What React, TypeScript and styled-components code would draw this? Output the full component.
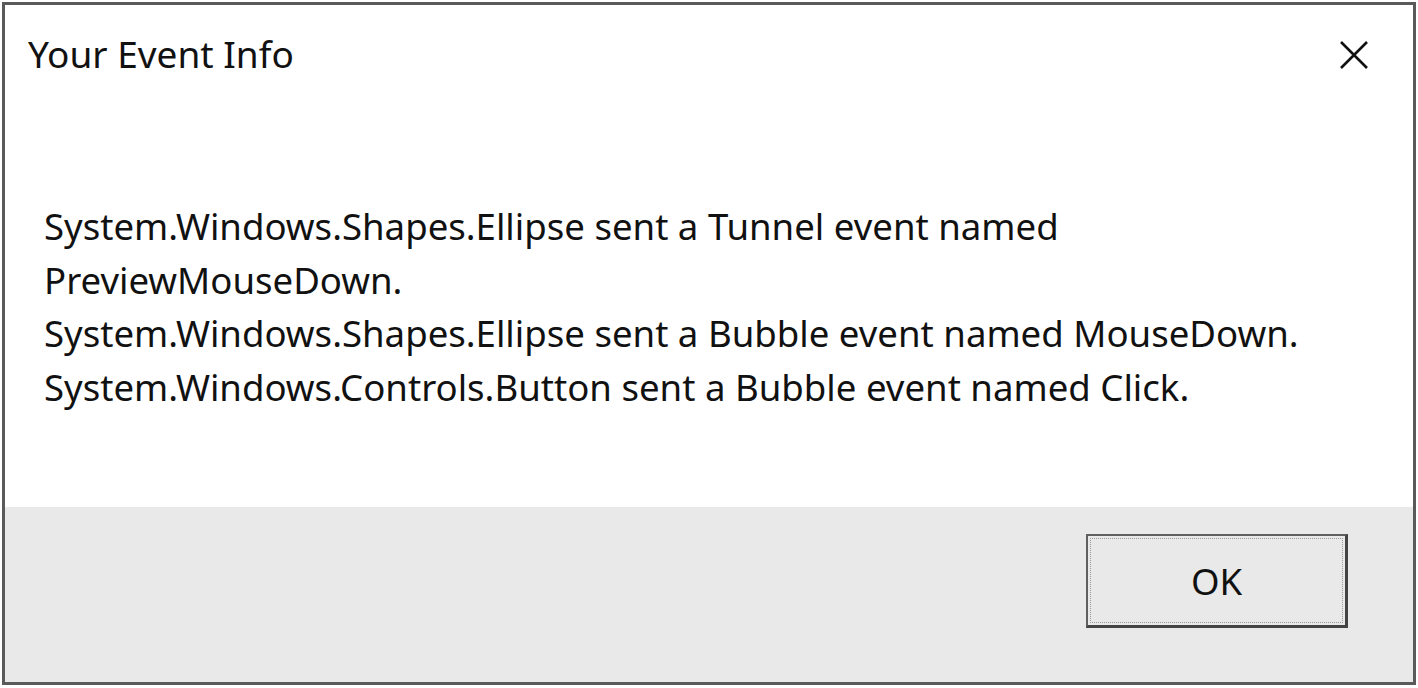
import styled, { createGlobalStyle } from "styled-components"

// Event info message box

const GlobalStyle = createGlobalStyle`
  html, body {
    margin: 0;
    padding: 0;
    background: #ffffff;
  }
  body {
    font-family: "Noto Sans", "Open Sans", "Liberation Sans", sans-serif;
    color: #111111;
  }
`

const LINES = [
  "System.Windows.Shapes.Ellipse sent a Tunnel event named",
  "PreviewMouseDown.",
  "System.Windows.Shapes.Ellipse sent a Bubble event named MouseDown.",
  "System.Windows.Controls.Button sent a Bubble event named Click.",
]

const App = () => {
  return (
    <>
      <GlobalStyle />
      <Window>
        <TitleBar>
          <Title>Your Event Info</Title>
          <CloseButton aria-label="Close">
            <svg width="30" height="30" viewBox="0 0 30 30">
              <path
                d="M2 2 L28 28 M28 2 L2 28"
                stroke="#111"
                strokeWidth="2.6"
                fill="none"
              />
            </svg>
          </CloseButton>
        </TitleBar>

        <Content>
          {LINES.map((line) => (
            <Line key={line}>{line}</Line>
          ))}
        </Content>

        <Footer>
          <OkButton>
            <FocusRing>OK</FocusRing>
          </OkButton>
        </Footer>
      </Window>
    </>
  )
}

/////////////////////////////////////////////////////////////////////////////

const Window = styled.div`
  box-sizing: border-box;
  margin: 2px 2px 0 2px;
  height: 683px;
  border: 3px solid #5a5a5a;
  display: flex;
  flex-direction: column;
  background: #ffffff;
`

const TitleBar = styled.div`
  height: 100px;
  display: flex;
  align-items: center;
  justify-content: space-between;
  padding: 0 44px 0 23px;
`

const Title = styled.div`
  font-size: 37px;
  line-height: 1;
  color: #111;
  margin-top: -3px;
`

const CloseButton = styled.div`
  width: 30px;
  height: 30px;
  display: flex;
  align-items: center;
  justify-content: center;
`

const Content = styled.div`
  flex: 1;
  padding: 95px 0 0 39px;
`

const Line = styled.div`
  font-size: 36.6px;
  line-height: 53.7px;
  color: #111;
  white-space: nowrap;
`

const Footer = styled.div`
  box-sizing: border-box;
  height: 175px;
  background: #e9e9e9;
  display: flex;
  align-items: flex-start;
  justify-content: flex-end;
  padding: 27px 65px 0 0;
`

const OkButton = styled.div`
  box-sizing: border-box;
  width: 262px;
  height: 94px;
  border: 2px solid #5f5f5f;
  border-right-width: 3px;
  border-bottom-width: 3px;
  border-right-color: #444;
  border-bottom-color: #444;
  background: #e9e9e9;
  padding: 2px;
  display: flex;
`

const FocusRing = styled.div`
  flex: 1;
  border: 1px dotted #9a9a9a;
  display: flex;
  align-items: center;
  justify-content: center;
  font-size: 36.6px;
  color: #111;
`

export default App
